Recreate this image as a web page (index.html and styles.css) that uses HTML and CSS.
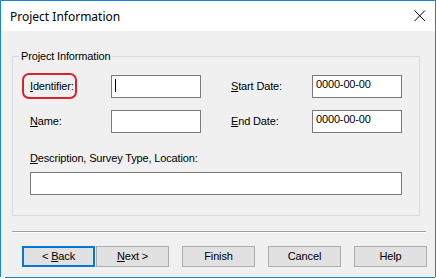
FILE: index.html
```html
<!DOCTYPE html>
<html>
<head>
<meta charset="utf-8">
<link rel="stylesheet" href="styles.css">
</head>
<body>
<div class="window">
  <div class="titlebar">
    <span class="title">Project Information</span>
    <svg class="close" width="12" height="12" viewBox="0 0 12 12"><path d="M0.5 0.5 L11 11 M11 0.5 L0.5 11" stroke="#000" stroke-width="1" fill="none"/></svg>
  </div>
  <div class="client">
    <div class="group">
      <span class="group-title">Project Information</span>
      <div class="form-grid">
        <div class="label ident"><span><span class="u">I</span>dentifier:</span><span class="oval"></span></div>
        <div class="field"><span class="caret"></span></div>
        <div></div>
        <div class="label"><span><span class="u">S</span>tart Date:</span></div>
        <div class="field">0000-00-00</div>
        <div class="label"><span><span class="u">N</span>ame:</span></div>
        <div class="field"></div>
        <div></div>
        <div class="label"><span><span class="u">E</span>nd Date:</span></div>
        <div class="field">0000-00-00</div>
      </div>
      <div class="desc-label"><span class="u">D</span>escription, Survey Type, Location:</div>
      <div class="field desc-field"></div>
    </div>
    <div class="separator"></div>
    <div class="buttons">
      <div class="btn default"><span>&lt; <span class="u">B</span>ack</span></div>
      <div class="btn next"><span><span class="u">N</span>ext &gt;</span></div>
      <div class="btn wide-gap"><span>Finish</span></div>
      <div class="btn wide-gap"><span>Cancel</span></div>
      <div class="btn wide-gap"><span>Help</span></div>
    </div>
  </div>
</div>
<div class="bottom-line"></div>
</body>
</html>
```

FILE: styles.css
```css
html, body {
  margin: 0;
  padding: 0;
  background: #ffffff;
}
body {
  width: 437px;
  height: 279px;
  overflow: hidden;
  font-family: "Liberation Sans", Arial, sans-serif;
  font-size: 11px;
  line-height: 13px;
  letter-spacing: -0.15px;
  color: #000;
}
.window {
  box-sizing: border-box;
  width: 436px;
  height: 277px;
  border: 1px solid #1883d7;
  border-bottom: none;
  display: flex;
  flex-direction: column;
}
.titlebar {
  height: 30px;
  flex: none;
  background: #fff;
  display: flex;
  align-items: center;
  padding-left: 9px;
}
.title {
  font-family: "Noto Sans", "Open Sans", sans-serif;
  font-size: 12px;
  line-height: 16px;
  letter-spacing: 0;
  margin-top: 1px;
}
.close {
  margin-left: auto;
  margin-right: 9px;
}
.client {
  flex: 1;
  background: #f0f0f0;
  display: flex;
  flex-direction: column;
}
.group {
  position: relative;
  box-sizing: border-box;
  margin: 25px 0 0 11px;
  width: 408px;
  height: 160px;
  border: 1px solid #dcdcdc;
  padding: 18px 0 0 17px;
}
.group-title {
  position: absolute;
  top: -7px;
  left: 6px;
  padding: 0 2px;
  background: #f0f0f0;
}
.form-grid {
  display: grid;
  grid-template-columns: 81px 90px 30px 81px 90px;
  grid-auto-rows: 23px;
  row-gap: 12px;
}
.label {
  display: flex;
  align-items: center;
  white-space: nowrap;
}
.ident {
  position: relative;
}
.oval {
  position: absolute;
  left: -8px;
  top: -2px;
  width: 51px;
  height: 22px;
  border: 2px solid #d9232d;
  border-radius: 7px;
}
.u {
  text-decoration: underline;
}
.field {
  box-sizing: border-box;
  height: 23px;
  background: #fff;
  border: 1px solid #7a7a7a;
  padding: 2px 3px;
  white-space: nowrap;
}
.caret {
  display: block;
  margin-top: 1px;
  width: 1px;
  height: 13px;
  background: #000;
}
.desc-label {
  margin-top: 19px;
  white-space: nowrap;
}
.desc-field {
  margin-top: 7px;
  width: 372px;
}
.separator {
  margin: 15px 0 0 11px;
  width: 414px;
  height: 0;
  border-top: 1px solid #a0a0a0;
  border-bottom: 1px solid #ffffff;
}
.buttons {
  display: flex;
  margin: 13px 0 0 21px;
}
.btn {
  box-sizing: border-box;
  width: 73px;
  height: 21px;
  background: #e1e1e1;
  border: 1px solid #adadad;
  display: flex;
  align-items: center;
  justify-content: center;
  white-space: nowrap;
}
.btn.default {
  border: 2px solid #0078d7;
}
.btn.next {
  margin-left: 1px;
}
.btn.wide-gap {
  margin-left: 13px;
}
.bottom-line {
  margin-left: 5px;
  width: 430px;
  height: 1px;
  background: #1883d7;
}
```
